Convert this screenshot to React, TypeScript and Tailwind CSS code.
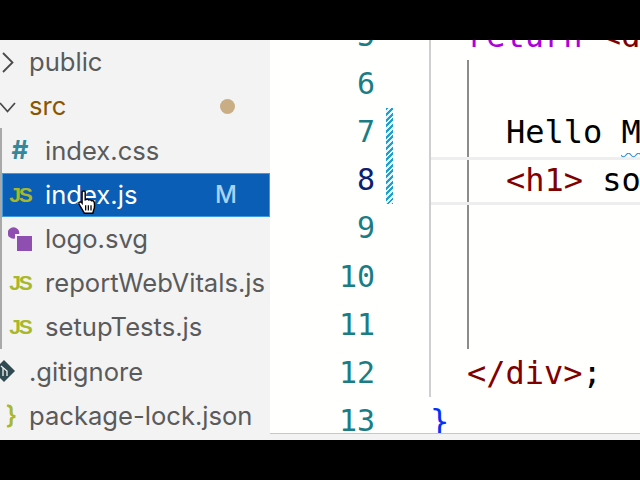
import React from "react";

const ui = { fontFamily: "Inter, 'Liberation Sans', sans-serif" };
const mono = { fontFamily: "'DejaVu Sans Mono', monospace" };

function JsIcon({ selected }: { selected?: boolean }) {
  return (
    <span
      className={`w-[24px] ${selected ? "ml-[5px]" : "ml-[8px]"} mr-[13px] text-[21px] font-bold text-[#a9b72c] text-center tracking-[-2px] shrink-0 font-['Liberation_Sans']`}
    >
      JS
    </span>
  );
}

function Row({ icon, label, labelClass = "text-[#5a5a5a]", rowClass = "", children }: { icon: React.ReactNode; label: string; labelClass?: string; rowClass?: string; children?: React.ReactNode }) {
  return (
    <div className={`h-[44.2px] flex items-center shrink-0 ${rowClass}`}>
      {icon}
      <span className={`text-[25.6px] leading-none whitespace-nowrap ${labelClass}`}>{label}</span>
      {children}
    </div>
  );
}

function Hand() {
  return (
    <svg width="20" height="25" viewBox="1 1 20 28" className="absolute left-[77px] top-[150px]">
      <path d="M6 2.500c1.500-1 3 0 3 1.500V12l1-.3c1-.8 2.500-.5 3 .5 1-.6 2.500-.2 3 .8 1-.4 2.500 0 3 1.500.6 2.500.6 6-.5 9l-1 3.500H8l-5-8.500c-1-1.500-1.500-3-.8-3.800.8-.8 2.300-.3 3.300 1V4c0-.6.2-1.200.5-1.500z" fill="#fff" stroke="#000" strokeWidth="1.600" />
      <path d="M9.500 18v6M12.500 18v6M15.500 18v6" stroke="#000" strokeWidth="1.400" />
    </svg>
  );
}

const lines: { n: string; color?: string; pl: number; content?: React.ReactNode }[] = [
  { n: "5", pl: 37, content: <><span className="text-[#af00db]">return </span><span className="text-[#800000]">&lt;d</span></> },
  { n: "6", pl: 0 },
  { n: "7", pl: 76, content: <span className="text-black">Hello Ma</span> },
  { n: "8", pl: 76, color: "text-[#0b216f]", content: <><span className="text-[#800000]">&lt;h1&gt;</span><span className="text-black"> so</span></> },
  { n: "9", pl: 0 },
  { n: "10", pl: 0 },
  { n: "11", pl: 0 },
  { n: "12", pl: 37, content: <><span className="text-[#800000]">&lt;/div&gt;</span><span className="text-black">;</span></> },
  { n: "13", pl: 0, content: <span className="text-[#0431fa]">{"}"}</span> },
];

export default function App() {
  return (
    <div className="w-[640px] h-[480px] bg-black flex flex-col overflow-hidden">
      <div className="h-[40px] shrink-0 bg-black relative z-10" />
      <div className="h-[400px] flex overflow-hidden">
        <aside className="w-[270px] shrink-0 bg-[#f3f3f3] flex flex-col overflow-hidden relative" style={ui}>
          <Row
            icon={
              <svg width="20" height="24" viewBox="0 0 20 24" fill="none" stroke="#4a4a4a" strokeWidth="1.800" className="mr-[9px] shrink-0">
                <path d="M3 3l9.500 9.500L3 22" />
              </svg>
            }
            label="public"
          />
          <Row
            icon={
              <svg width="20" height="24" viewBox="0 0 20 24" fill="none" stroke="#4a4a4a" strokeWidth="1.800" className="mr-[9px] shrink-0">
                <path d="M0 9l7.500 8.500L15 9" />
              </svg>
            }
            label="src"
            labelClass="text-[#895503]"
          >
            <span className="w-[15px] h-[15px] rounded-full bg-[#c9ad85] ml-auto mr-[35px]" />
          </Row>
          <Row
            icon={<span className="w-[24px] ml-[8px] mr-[13px] text-[26px] font-bold text-[#34889b] text-center leading-none shrink-0">#</span>}
            label="index.css"
          />
          <Row icon={<JsIcon selected />} label="index.js" labelClass="text-white" rowClass="bg-[#0a5eb5] border border-[#3d9ae0] ml-[2px]">
            <span className="ml-auto mr-[32px] text-[24px] font-medium text-[#a9d3f5]">M</span>
          </Row>
          <Row
            icon={
              <svg width="24" height="24" viewBox="0 0 24 24" className="ml-[8px] mr-[13px] shrink-0">
                <circle cx="5.500" cy="6" r="5.800" fill="#8f4fb0" />
                <rect x="7" y="7" width="17" height="17" fill="#f3f3f3" />
                <rect x="9" y="9" width="15" height="15" fill="#8f4fb0" />
              </svg>
            }
            label="logo.svg"
          />
          <Row icon={<JsIcon />} label="reportWebVitals.js" />
          <Row icon={<JsIcon />} label="setupTests.js" />
          <Row
            icon={
              <svg width="15" height="22" viewBox="0 0 15 22" className="mr-[14px] shrink-0">
                <path d="M4 0l11 11-11 11-11-11z" fill="#2f4a50" />
                <path d="M1 6l6 5v5M3 8v8" stroke="#f3f3f3" strokeWidth="1.300" fill="none" />
              </svg>
            }
            label=".gitignore"
          />
          <Row
            icon={<span className="w-[17px] mr-[12px] flex justify-end text-[25px] font-semibold text-[#a9b72c] leading-none whitespace-pre shrink-0">{"{ }"}</span>}
            label="package-lock.json"
          />
          <div className="absolute left-0 top-[88px] w-[2px] h-[221px] bg-[#a9a9a9]" />
          <Hand />
        </aside>
        <main className="flex-1 bg-[#fffffe] relative overflow-hidden" style={mono}>
          <div className="flex flex-col -mt-[28px]">
            {lines.map((l) => (
              <div key={l.n} className="h-[48.1px] flex items-center shrink-0 leading-none whitespace-pre">
                <span className={`w-[105px] text-right shrink-0 text-[30px] ${l.color ?? "text-[#1a7d85]"}`}>{l.n}</span>
                <span className="w-[55px] shrink-0" />
                <span className="text-[32px]" style={{ paddingLeft: l.pl }}>{l.content}</span>
              </div>
            ))}
          </div>
          {/* guides */}
          <div className="absolute left-[159px] top-0 w-[2px] h-[357px] bg-[#cfcfcf]" />
          <div className="absolute left-[197px] top-[20px] w-[2px] h-[289px] bg-[#8c8c8c]" />
          {/* current line */}
          <div className="absolute left-[161px] right-0 top-[117px] h-[48px] border-y-[3px] border-[#eeeeee]" />
          {/* dirty marker */}
          <div className="absolute left-[116px] top-[68px] w-[7px] h-[96px] bg-[repeating-linear-gradient(135deg,#1f9fd0_0,#1f9fd0_2px,#e3f3fa_2px,#e3f3fa_4px)]" />
          {/* squiggle */}
          <svg width="20" height="6" viewBox="0 0 20 6" className="absolute left-[351px] top-[113px]">
            <path d="M0 2q2.500 3.500 5 0t5 0 5 0 5 0" fill="none" stroke="#3a8fd6" strokeWidth="1.200" />
          </svg>
          {/* panel edge */}
          <div className="absolute left-0 right-0 bottom-0 h-[7px] bg-[#f3f3f3] border-t border-[#c8c8c8]" />
        </main>
      </div>
      <div className="flex-1 bg-black" />
    </div>
  );
}
